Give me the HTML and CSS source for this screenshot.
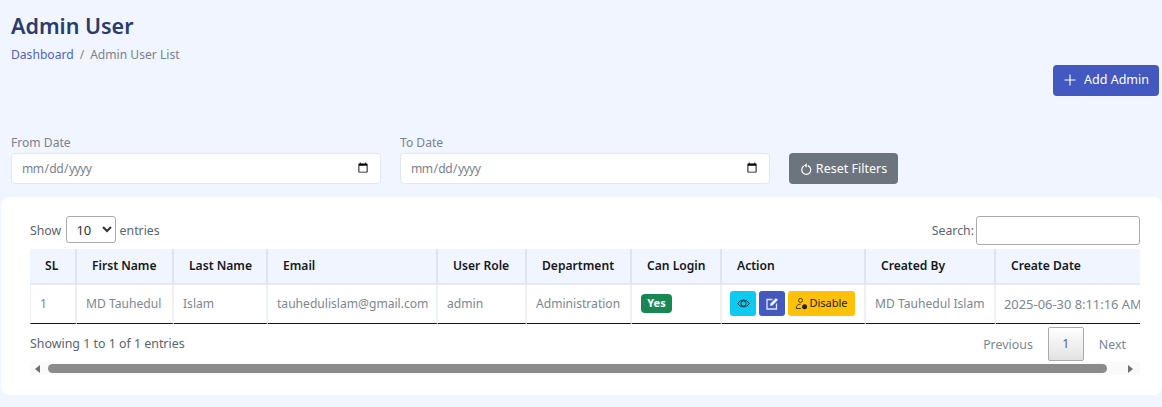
FILE: index.html
```html
<!DOCTYPE html>
<html lang="en">
<head>
<meta charset="UTF-8">
<meta name="viewport" content="width=device-width, initial-scale=1.0">
<title>Admin User</title>
<link rel="stylesheet" href="styles.css">
</head>
<body>
<div class="page-head">
  <div>
    <h1 class="page-title">Admin User</h1>
    <div class="breadcrumb"><a href="#">Dashboard</a><span class="sep">/</span><span>Admin User List</span></div>
  </div>
  <a class="btn btn-add" href="#">
    <svg width="14" height="14" viewBox="0 0 14 14"><path d="M7 1.5v11M1.5 7h11" stroke="#fff" stroke-width="1.1" fill="none"/></svg>
    Add Admin
  </a>
</div>

<div class="filters">
  <div class="field">
    <label for="from">From Date</label>
    <input type="date" id="from">
  </div>
  <div class="field">
    <label for="to">To Date</label>
    <input type="date" id="to">
  </div>
  <button class="btn btn-reset">
    <svg class="reset-icon" width="13" height="13" viewBox="0 0 13 13"><path d="M7.8 2.6a4.5 4.500 0 1 1-4 .5" stroke="#fff" stroke-width="1.2" fill="none"/><path d="M6.800.2v4.400L3.900 2.400z" fill="#fff"/></svg>
    Reset Filters
  </button>
</div>

<div class="card">
  <div class="dt-top">
    <div class="dt-length">Show
      <select><option>10</option><option>25</option></select>
      entries</div>
    <div class="dt-search"><label for="q">Search:</label><input type="search" id="q"></div>
  </div>
  <div class="dt-scroll">
    <table class="dt-table">
      <thead>
        <tr>
          <th class="c1">SL</th>
          <th class="c2">First Name</th>
          <th class="c3">Last Name</th>
          <th class="c4">Email</th>
          <th class="c5">User Role</th>
          <th class="c6">Department</th>
          <th class="c7">Can Login</th>
          <th class="c8">Action</th>
          <th class="c9">Created By</th>
          <th class="c10">Create Date</th>
        </tr>
      </thead>
      <tbody>
        <tr>
          <td>1</td>
          <td>MD Tauhedul</td>
          <td>Islam</td>
          <td>tauhedulislam@gmail.com</td>
          <td>admin</td>
          <td>Administration</td>
          <td><span class="badge">Yes</span></td>
          <td>
            <div class="actions">
              <a class="act act-view" href="#">
                <svg width="13" height="13" viewBox="0 0 13 13" fill="none" stroke="#12323c" stroke-width="1"><path d="M.8 6.500C2 4.300 4 3.200 6.500 3.200s4.500 1.100 5.700 3.300C11 8.700 9 9.800 6.500 9.800S2 8.700.8 6.500z"/><circle cx="6.500" cy="6.500" r="2.600"/></svg>
              </a>
              <a class="act act-edit" href="#">
                <svg width="14" height="14" viewBox="0 0 14 14" fill="none" stroke="#dfe3fa" stroke-width="1.300"><path d="M7.500 2.500H2v9.500h9.500V6.500"/><path d="M5.500 8.500l.4-1.900L11 1.500l1.500 1.500-5.100 5.100z" fill="#fff" stroke="#fff" stroke-width=".6"/></svg>
              </a>
              <a class="act act-disable" href="#">
                <svg width="13" height="13" viewBox="0 0 13 13" fill="none" stroke="#333" stroke-width=".9"><circle cx="5.500" cy="3.400" r="2"/><path d="M1.200 11.500c0-2.800 1.700-4.300 4.300-4.300"/><path d="M1.200 11.500h4.600"/><circle cx="9.600" cy="9.800" r="2.500" fill="#222" stroke="none"/></svg>
                <span class="act-label">Disable</span>
              </a>
            </div>
          </td>
          <td>MD Tauhedul Islam</td>
          <td class="td-date">2025-06-30 8:11:16 AM</td>
        </tr>
      </tbody>
    </table>
  </div>
  <div class="dt-bottom">
    <div class="dt-info">Showing 1 to 1 of 1 entries</div>
    <div class="dt-pages">
      <a href="#">Previous</a>
      <a class="current" href="#">1</a>
      <a href="#">Next</a>
    </div>
  </div>
  <div class="fake-scroll">
    <span class="arrow arrow-left"></span>
    <span class="thumb"></span>
    <span class="arrow arrow-right"></span>
  </div>
</div>
</body>
</html>
```

FILE: styles.css
```css
* {
  box-sizing: border-box;
}
body {
  margin: 0;
  height: 407px;
  overflow: hidden;
  background-color: #f0f5ff;
  font-family: "Noto Sans", Arial, sans-serif;
  font-size: 12.1px;
  color: #7a8290;
}
a {
  text-decoration: none;
}
.page-head {
  display: flex;
  justify-content: space-between;
  align-items: flex-start;
  padding: 11px 3px 0 11px;
  height: 135px;
}
.page-title {
  margin: 0;
  font-size: 21.5px;
  line-height: 30px;
  font-weight: 600;
  color: #2a3b6e;
}
.breadcrumb {
  margin-top: 5px;
  line-height: 18px;
}
.breadcrumb a {
  color: #4f63c4;
}
.sep {
  margin: 0 6px;
}
.btn {
  display: inline-flex;
  align-items: center;
  border-radius: 4px;
  color: #fff;
  border: none;
  font-family: inherit;
  font-size: 12.5px;
}
.btn-add {
  margin-top: 54px;
  height: 31px;
  width: 106px;
  padding-bottom: 2px;
  justify-content: center;
  gap: 7px;
  background-color: #4459c0;
}
.filters {
  display: flex;
  align-items: flex-end;
  gap: 19px;
  padding-left: 11px;
}
.field {
  width: 370px;
}
.field label {
  display: block;
  line-height: 16px;
  margin-bottom: 2px;
}
.field input {
  display: block;
  width: 100%;
  height: 31px;
  padding: 0 9px;
  background: #fff;
  border: 1px solid #e2e6ef;
  border-radius: 4px;
  font-family: inherit;
  font-size: 12.1px;
  color: #7a8290;
}
.field input::-webkit-datetime-edit {
  letter-spacing: -0.6px;
}
.btn-reset {
  width: 109px;
  height: 31px;
  padding-bottom: 2px;
  justify-content: center;
  gap: 3px;
  background-color: #6c757d;
}
.reset-icon {
  margin-top: 3px;
}
.card {
  margin: 13px 0 0 1px;
  height: 198px;
  padding: 19px 22px 0 29px;
  background: #fff;
  border-radius: 8px;
}
.dt-top {
  display: flex;
  justify-content: space-between;
  height: 29px;
  color: #5b6470;
  font-size: 12.3px;
}
.dt-length select {
  width: 50px;
  height: 27px;
  margin: 0 0 0 2px;
  padding-left: 5px;
  background: #fff;
  border: 1px solid #aaa;
  border-radius: 3px;
  font-family: inherit;
  font-size: 13px;
  color: #333;
}
.dt-search {
  display: flex;
  align-items: center;
  gap: 2px;
}
.dt-search input {
  width: 164px;
  height: 29px;
  background: #fff;
  border: 1px solid #aaa;
  border-radius: 3px;
}
.dt-scroll {
  margin-top: 4px;
  overflow: hidden;
}
.dt-table {
  table-layout: fixed;
  width: 1146px;
  border-collapse: separate;
  border-spacing: 0;
}
.dt-table th {
  height: 36px;
  padding: 0 8px 2px 15px;
  background-color: #f0f5ff;
  border-right: 2px solid #dfe4ef;
  border-bottom: 2px solid #e6e9f0;
  color: #16181d;
  font-size: 12.1px;
  font-weight: 600;
  text-align: left;
  white-space: nowrap;
}
.dt-table td {
  height: 39px;
  padding: 0 0 1px 9px;
  border-right: 2px solid #eef0f4;
  border-bottom: 1px solid #111;
  color: #7b8794;
  font-size: 12.1px;
  white-space: nowrap;
}
.dt-table tr td:first-child {
  border-left: 1px solid #eef0f4;
}
.dt-table th:last-child,
.dt-table td:last-child {
  border-right: none;
}
.dt-table .td-date {
  padding-left: 8px;
  font-size: 12.9px;
}
.c1 { width: 47px; }
.c2 { width: 97px; }
.c3 { width: 94px; }
.c4 { width: 170px; }
.c5 { width: 89px; }
.c6 { width: 105px; }
.c7 { width: 90px; }
.c8 { width: 144px; }
.c9 { width: 130px; }
.c10 { width: 180px; }
.badge {
  display: inline-block;
  width: 31px;
  height: 19px;
  line-height: 17px;
  text-align: center;
  background-color: #198754;
  border-radius: 4px;
  color: #fff;
  font-size: 11px;
  font-weight: 700;
}
.actions {
  display: flex;
  gap: 3px;
  margin-left: -1px;
}
.act {
  display: inline-flex;
  align-items: center;
  justify-content: center;
  height: 25px;
  border-radius: 3px;
}
.act-view {
  width: 26px;
  background-color: #0dcaf0;
}
.act-edit {
  width: 26px;
  background-color: #4459c0;
}
.act-disable {
  width: 67px;
  gap: 1px;
  background-color: #ffc107;
  color: #222;
  font-size: 11px;
}
.act-label {
  margin-bottom: 3px;
}
.dt-bottom {
  display: flex;
  justify-content: space-between;
  align-items: center;
  padding-top: 3px;
  color: #5b6470;
  font-size: 12.4px;
}
.dt-info {
  margin-bottom: 2px;
}
.dt-pages {
  display: flex;
  align-items: center;
}
.dt-pages a {
  padding: 0 14px;
  color: #7b8794;
}
.dt-pages .current {
  width: 36px;
  height: 34px;
  padding: 0;
  margin: 0 1px;
  line-height: 32px;
  text-align: center;
  border: 1px solid #aaa;
  border-radius: 2px;
  background: linear-gradient(to bottom, #fff, #e2e2e2);
  color: #5b6470;
}
.fake-scroll {
  display: flex;
  align-items: center;
  height: 13px;
  margin-top: 1px;
  background-color: #fafafa;
}
.thumb {
  flex: 1;
  height: 9px;
  margin: 0 21px 0 8px;
  border-radius: 5px;
  background-color: #8b8b8b;
}
.arrow {
  width: 0;
  height: 0;
  border-top: 4px solid transparent;
  border-bottom: 4px solid transparent;
}
.arrow-left {
  margin-left: 5px;
  border-right: 5px solid #6f6f6f;
}
.arrow-right {
  margin-right: 7px;
  border-left: 5px solid #6f6f6f;
}
```
